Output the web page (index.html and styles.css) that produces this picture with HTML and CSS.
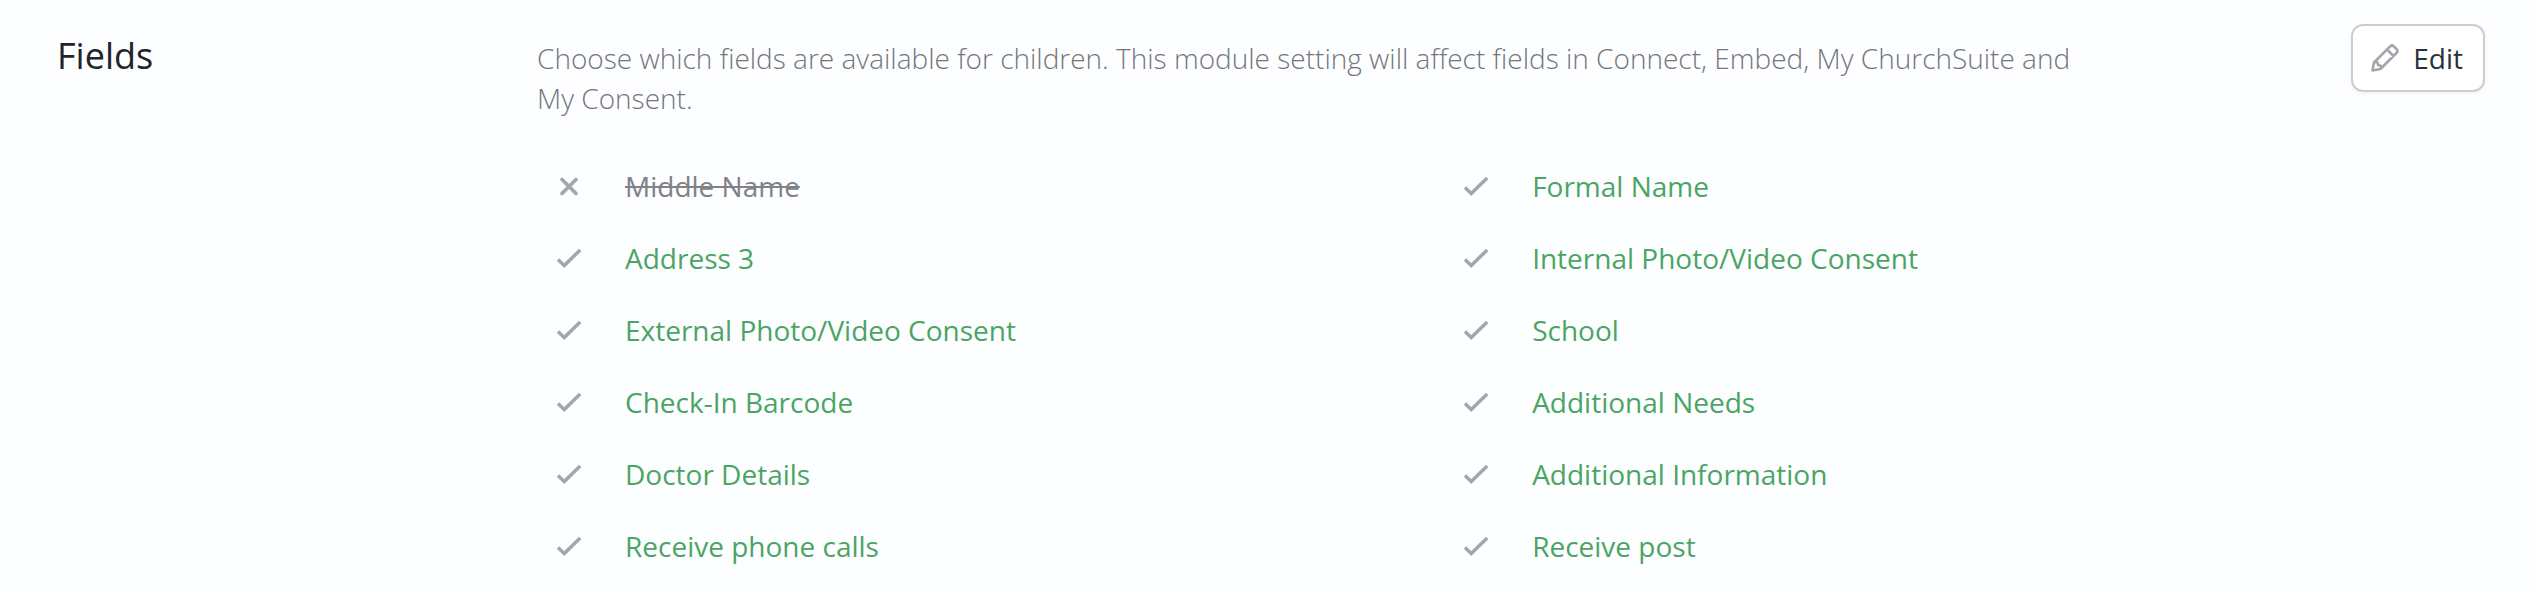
FILE: index.html
```
<!DOCTYPE html>
<html lang="en">
<head>
  <meta charset="UTF-8">
  <meta name="viewport" content="width=device-width, initial-scale=1.0">
  <title>Fields</title>
  <link rel="stylesheet" href="styles.css">
</head>
<body>
  <svg class="sprite" aria-hidden="true">
    <symbol id="check" viewBox="0 0 28 28">
      <path d="M3 15.500L9.200 21.500L25.200 6" fill="none" stroke="currentColor" stroke-width="3.500"/>
    </symbol>
    <symbol id="cross" viewBox="0 0 28 28">
      <path d="M7 7.500L21 21.500M21 7.500L7 21.500" fill="none" stroke="currentColor" stroke-width="3.800" stroke-linecap="round"/>
    </symbol>
  </svg>

  <section class="settings">
    <h2 class="settings__title">Fields</h2>

    <div class="settings__content">
      <p class="settings__description">Choose which fields are available for children. This module setting will affect fields in Connect, Embed, My ChurchSuite and My Consent.</p>

      <ul class="fields">
        <li class="field field--off"><svg class="field__icon"><use href="#cross"/></svg><span>Middle Name</span></li>
        <li class="field"><svg class="field__icon"><use href="#check"/></svg><span>Formal Name</span></li>
        <li class="field"><svg class="field__icon"><use href="#check"/></svg><span>Address 3</span></li>
        <li class="field"><svg class="field__icon"><use href="#check"/></svg><span>Internal Photo/Video Consent</span></li>
        <li class="field"><svg class="field__icon"><use href="#check"/></svg><span>External Photo/Video Consent</span></li>
        <li class="field"><svg class="field__icon"><use href="#check"/></svg><span>School</span></li>
        <li class="field"><svg class="field__icon"><use href="#check"/></svg><span>Check-In Barcode</span></li>
        <li class="field"><svg class="field__icon"><use href="#check"/></svg><span>Additional Needs</span></li>
        <li class="field"><svg class="field__icon"><use href="#check"/></svg><span>Doctor Details</span></li>
        <li class="field"><svg class="field__icon"><use href="#check"/></svg><span>Additional Information</span></li>
        <li class="field"><svg class="field__icon"><use href="#check"/></svg><span>Receive phone calls</span></li>
        <li class="field"><svg class="field__icon"><use href="#check"/></svg><span>Receive post</span></li>
      </ul>
    </div>

    <button class="edit-btn" type="button">
      <svg class="edit-btn__icon" viewBox="0 0 28 28" aria-hidden="true">
        <path d="M1.500 26.500L3 18.500L19 2.500Q21 0.500 23 2.500L25.500 5Q27.500 7 25.500 9L9.500 25L1.500 26.500ZM16 5.500L22.500 12M3 18.500Q7 16.500 7 21Q11.500 21 9.500 25" fill="none" stroke="currentColor" stroke-width="2.600" stroke-linejoin="round"/>
      </svg>
      Edit
    </button>
  </section>
</body>
</html>
```
FILE: styles.css
```
body {
  margin: 0;
  background: #fdfeff;
  color: #212529;
  font-family: "Open Sans", sans-serif;
  font-size: 28px;
  line-height: 40px;
}

.sprite {
  display: none;
}

.settings {
  display: grid;
  grid-template-columns: 480px 1fr auto;
  align-items: start;
  padding: 24px 53px 0 57px;
}

.settings__title {
  margin: 0;
  padding-top: 6px;
  font-size: 36px;
  font-weight: 400;
  line-height: 52px;
}

.settings__content {
  padding-top: 14px;
}

.settings__description {
  max-width: 1560px;
  margin: 0;
  color: #74767b;
  font-weight: 300;
}

.fields {
  display: grid;
  grid-template-columns: 1fr 1fr;
  margin: 32px 0 0;
  padding: 0;
  list-style: none;
}

.field {
  display: flex;
  align-items: center;
  padding: 16px 0;
  color: #4aa564;
}

.field--off {
  color: #808287;
  text-decoration: line-through;
}

.field__icon {
  width: 28px;
  height: 28px;
  margin: 0 42px 0 18px;
  color: #a5a6ab;
}

.edit-btn {
  display: flex;
  align-items: center;
  gap: 14px;
  padding: 12px 20px 12px 18px;
  border: 2px solid #cccdd0;
  border-radius: 12px;
  background: #fff;
  box-shadow: 0 2px 4px rgba(0, 0, 0, 0.04);
  color: #29323a;
  font: inherit;
  cursor: pointer;
}

.edit-btn__icon {
  width: 28px;
  height: 28px;
  color: #a5a6ab;
}
```
